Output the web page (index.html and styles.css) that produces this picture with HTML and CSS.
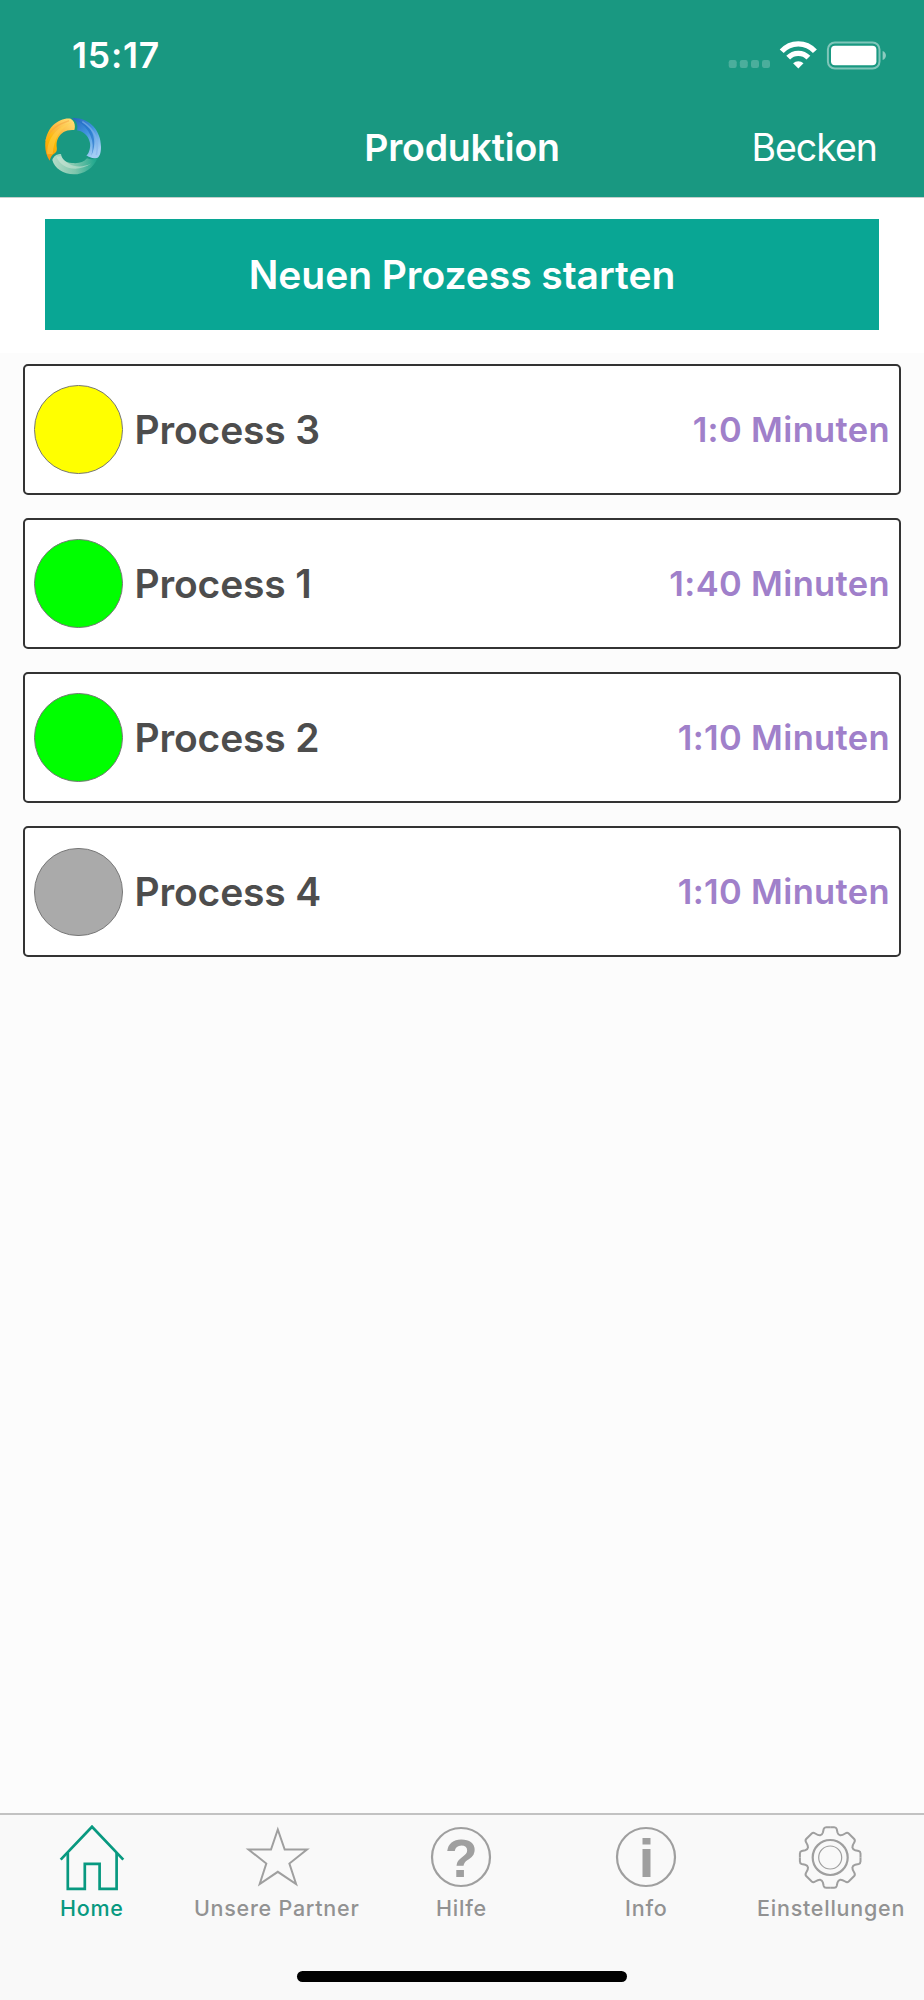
FILE: index.html
```html
<!DOCTYPE html>
<html lang="de">
<head>
<meta charset="utf-8">
<title>Produktion</title>
<link rel="stylesheet" href="styles.css">
</head>
<body>
<div class="app">
  <header class="header">
    <div class="status">
      <span class="time">15:17</span>
      <svg class="status-icons" width="160" height="32" viewBox="0 0 160 32">
        <g fill="#fff" fill-opacity=".22"><rect x="0.7" y="20" width="8" height="8" rx="2.2"/><rect x="11.8" y="20" width="8" height="8" rx="2.2"/><rect x="23" y="20" width="8" height="8" rx="2.2"/><rect x="34" y="20" width="8" height="8" rx="2.2"/></g>
        <g fill="none" stroke="#fff" stroke-width="5.3"><path d="M53.7 11.3a22.2 22.2 0 0 1 33.2 0"/><path d="M60.2 17.6a14 14 0 0 1 20.2 0"/></g>
        <path d="M70.3 28.5l-5.2-5.3a7.6 7.6 0 0 1 10.4 0z" fill="#fff"/>
        <rect x="99.9" y="2.5" width="51.6" height="26" rx="7" fill="none" stroke="#fff" stroke-opacity=".45" stroke-width="2"/>
        <rect x="103" y="5.7" width="45.4" height="19.6" rx="4" fill="#fff"/>
        <path d="M154.6 11c2.5 1 3.3 2.7 3.3 4.5s-.8 3.500-3.300 4.500z" fill="#fff" fill-opacity=".5"/>
      </svg>
    </div>
    <nav class="navbar">
      <svg class="logo" width="60" height="60" viewBox="38 33 180 180">
        <defs>
          <linearGradient id="gold" x1=".8" y1="0" x2=".2" y2="1"><stop offset="0" stop-color="#ffdc70"/><stop offset=".35" stop-color="#fbbb45"/><stop offset=".65" stop-color="#fdb900"/><stop offset="1" stop-color="#f59414"/></linearGradient>
          <linearGradient id="blue" x1="0" y1="0" x2=".6" y2="1"><stop offset="0" stop-color="#2764bd"/><stop offset=".5" stop-color="#4094df"/><stop offset="1" stop-color="#a4cdf4"/></linearGradient>
          <linearGradient id="mint" x1="0" y1="0" x2="1" y2="0"><stop offset="0" stop-color="#b4dbc8"/><stop offset=".5" stop-color="#7fc6ad"/><stop offset="1" stop-color="#17a58a"/></linearGradient>
        </defs>
        <path fill="url(#gold)" d="M58 167C37 137 41 88 68 61C84 46 105 38 121 41C133 48 136 62 132 75C118 74 108 76 100 81C85 91 77 107 79 125C81 138 78 141 70 147C62 153 60 160 58 167Z"/>
        <path d="M51 148C48 108 75 64 128 52C88 70 72 100 67 147" fill="#ffd34d" opacity=".5"/>
        <path d="M46 108C60 70 85 58 116 47" fill="none" stroke="#f6a13c" stroke-width="4" opacity=".55"/>
        <path fill="url(#blue)" d="M125 39C175 36 212 75 212 125C212 145 207 155 202 158C190 162 178 158 168 151C178 145 182 120 178 110C172 88 155 78 140 76C144 60 139 48 125 39Z"/>
        <path d="M141 46C185 60 205 105 183 152C196 108 178 72 141 46Z" fill="#1e70c7" opacity=".65"/>
        <path d="M156 50C197 76 207 110 198 150" fill="none" stroke="#86b2eb" stroke-width="5" opacity=".6"/>
        <path fill="url(#mint)" d="M66 165C70 152 82 146 92 147C95 165 105 172 125 174C145 176 160 172 170 160C182 165 195 163 202 158C190 190 160 208 130 208C100 208 72 190 66 165Z"/>
        <path d="M78 155C92 190 140 205 184 175C148 193 112 185 92 153Z" fill="#d6e9dc" opacity=".5"/>
      </svg>
      <h1 class="title">Produktion</h1>
      <a class="nav-link">Becken</a>
    </nav>
  </header>
  <section class="action"><button class="start">Neuen Prozess starten</button></section>
  <main class="list">
    <article class="card"><span class="dot yellow"></span><span class="name">Process 3</span><span class="mins">1:0 Minuten</span></article>
    <article class="card"><span class="dot green"></span><span class="name">Process 1</span><span class="mins">1:40 Minuten</span></article>
    <article class="card"><span class="dot green"></span><span class="name">Process 2</span><span class="mins">1:10 Minuten</span></article>
    <article class="card"><span class="dot gray"></span><span class="name">Process 4</span><span class="mins">1:10 Minuten</span></article>
  </main>
  <footer class="tabbar">
    <div class="tabs">
      <a class="tab active"><svg class="icon" viewBox="-36 -36 72 72"><g fill="none" stroke="currentColor" stroke-width="2.700"><path d="M-31.300 2.600L0-30.300L31.300 2.600"/><path d="M-24.200-4V31.800H-7.200V6.800H7.600V31.800H24.600V-4"/></g></svg><span>Home</span></a>
      <a class="tab"><svg class="icon" viewBox="-36 -36 72 72"><path d="M.8-27.500L7.700-7.500H30L12.400 6.500L19.100 27L.8 14.800L-17.300 27L-10.700 6.500L-28.500-7.500H-6Z" fill="none" stroke="currentColor" stroke-width="2"/></svg><span>Unsere Partner</span></a>
      <a class="tab"><svg class="icon" viewBox="-36 -36 72 72"><circle cx="-1" cy="0" r="29" fill="none" stroke="currentColor" stroke-width="2.200"/><text class="mark" x="-.7" y="19.500" text-anchor="middle">?</text></svg><span>Hilfe</span></a>
      <a class="tab"><svg class="icon" viewBox="-36 -36 72 72"><circle cx="-1" cy="0" r="29" fill="none" stroke="currentColor" stroke-width="2.200"/><path d="M-4.500-19H3.500V-12.500H-4.500ZM-4.500-8H3.500V20H-4.500Z" fill="currentColor"/></svg><span>Info</span></a>
      <a class="tab"><svg class="icon" viewBox="-36 -36 72 72"><defs><path id="quarter" d="M0-30.300H4Q6-30.300 6.500-28.500L7.300-25Q8-22.600 10-22.200Q12-22 15-24Q17-25.300 18.500-24L24-18.500Q25.300-17 24-15Q22-12 22.200-10Q22.600-8 25-7.300L28.500-6.500Q30.300-6 30.300-4V0"/></defs><g transform="translate(-1.800 .5)" fill="none" stroke="currentColor" stroke-width="2"><use href="#quarter"/><use href="#quarter" transform="rotate(90)"/><use href="#quarter" transform="rotate(180)"/><use href="#quarter" transform="rotate(270)"/><circle r="17.500" stroke-width="2.200"/><circle r="11.500" stroke-width="1.200"/></g></svg><span>Einstellungen</span></a>
    </div>
    <div class="home-indicator"></div>
  </footer>
</div>
</body>
</html>
```
FILE: styles.css
```css
* { box-sizing: border-box; }
body { margin: 0; font-family: Inter, "Liberation Sans", sans-serif; }
.app { width: 924px; height: 2000px; display: flex; flex-direction: column; background: #fcfcfc; }
.header { height: 197px; background: #199881; color: #fff; }
.status { height: 98px; display: flex; justify-content: space-between; padding: 34px 36px 0 72px; }
.time { font-size: 35.5px; line-height: 44px; font-weight: 600; letter-spacing: .8px; }
.status-icons { margin-top: 6px; }
.navbar { height: 99px; display: grid; grid-template-columns: 1fr auto 1fr; align-items: center; padding: 0 47px 0 43px; }
.logo { display: block; margin-top: -4px; }
.title { margin: 0; padding-left: 4px; font-size: 37.5px; font-weight: 600; letter-spacing: -.2px; line-height: 50px; }
.nav-link { justify-self: end; font-size: 37.5px; line-height: 50px; letter-spacing: -1px; }
.action { height: 156px; border-top: 1px solid #c4cfcc; background: #fff; padding: 21px 45px 0; }
.start { display: block; width: 100%; height: 111px; border: 0; padding: 0; background: #09a694; color: #fff; font: 600 39px/50px Inter, "Liberation Sans", sans-serif; letter-spacing: -.05px; }
.list { flex: 1; padding: 11px 23px 0; display: flex; flex-direction: column; gap: 23.1px; }
.card { height: 131px; border: 2px solid #333; border-radius: 5px; background: #fff; display: flex; align-items: center; padding: 0 9px; }
.dot { width: 88.500px; height: 88.500px; border-radius: 50%; border: 1px solid #777; flex: none; }
.yellow { background: #ff0; }
.green { background: #0f0; }
.gray { background: #aaa; }
.name { margin-left: 12px; font-size: 39px; font-weight: 600; letter-spacing: -.15px; color: #4d4d4d; }
.mins { margin-left: auto; font-size: 34.5px; font-weight: 600; letter-spacing: .35px; color: #a080ca; }
.tabbar { height: 187px; border-top: 2px solid #c2c2c2; background: #f9f9f9; }
.tabs { display: grid; grid-template-columns: repeat(5, 1fr); padding-top: 6px; }
.tab { display: flex; flex-direction: column; align-items: center; color: #929292; font-size: 21.5px; line-height: 26px; font-weight: 500; letter-spacing: .75px; white-space: nowrap; }
.tab span { margin-top: 2px; margin-left: -1px; }
.active { color: #089980; }
.icon { width: 72px; height: 72px; color: #9f9f9f; }
.active .icon { color: #089980; }
.mark { font: bold 54px "Liberation Sans", sans-serif; fill: currentColor; letter-spacing: 0; }
.home-indicator { width: 330px; height: 11px; margin: 50px auto 0; border-radius: 6px; background: #000; }
```
